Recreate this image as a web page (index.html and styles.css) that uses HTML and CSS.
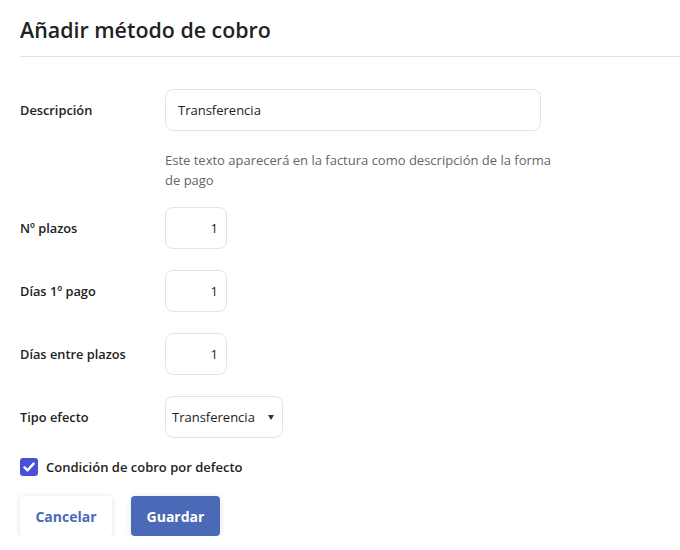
FILE: index.html
```html
<!DOCTYPE html>
<html lang="es">
<head>
<meta charset="utf-8">
<link rel="stylesheet" href="styles.css">
</head>
<body>
<div class="page">
  <header class="head"><h1 class="title">Añadir método de cobro</h1></header>
  <form class="form">
    <div class="row">
      <label class="label">Descripción</label>
      <div class="field">
        <input class="input wide" type="text" value="Transferencia">
        <p class="help">Este texto aparecerá en la factura como descripción de la forma de pago</p>
      </div>
    </div>
    <div class="row">
      <label class="label">Nº plazos</label>
      <div class="field"><input class="input num" type="text" value="1"></div>
    </div>
    <div class="row">
      <label class="label">Días 1º pago</label>
      <div class="field"><input class="input num" type="text" value="1"></div>
    </div>
    <div class="row">
      <label class="label">Días entre plazos</label>
      <div class="field"><input class="input num" type="text" value="1"></div>
    </div>
    <div class="row">
      <label class="label">Tipo efecto</label>
      <div class="field">
        <div class="select"><span>Transferencia</span><span class="caret"></span></div>
      </div>
    </div>
    <label class="check">
      <span class="box"><svg width="18" height="18" viewBox="0 0 18 18"><path d="M4.5 9.3 L7.6 12.3 L13.6 5.6" fill="none" stroke="#fff" stroke-width="2.4" stroke-linecap="round" stroke-linejoin="round"/></svg></span>
      <span>Condición de cobro por defecto</span>
    </label>
    <div class="actions">
      <button type="button" class="btn cancel">Cancelar</button>
      <button type="button" class="btn save">Guardar</button>
    </div>
  </form>
</div>
</body>
</html>
```
FILE: styles.css
```css
* { box-sizing: border-box; }
html, body { margin: 0; padding: 0; background: #fff; }
body { font-family: "Open Sans", "Noto Sans", sans-serif; color: #222; }
.page { padding-left: 20px; }
.head { border-bottom: 1px solid #e2e1e8; height: 57px; padding-top: 15px; }
.title { margin: 0; font-size: 21.4px; font-weight: 600; line-height: 30px; color: #222; letter-spacing: 0; }
.form { padding-top: 32px; display: flex; flex-direction: column; }
.row { display: flex; align-items: flex-start; margin-bottom: 21px; }
.label { width: 145px; flex: none; font-size: 12.8px; font-weight: 600; line-height: 42px; height: 42px; color: #222; }
.field { display: flex; flex-direction: column; }
.input { height: 42px; border: 1px solid #e3e3ec; border-radius: 8px; font-family: inherit; font-size: 13px; color: #222; background: #fff; outline: none; }
.wide { width: 376px; padding: 0 12px; }
.num { width: 62px; padding: 0 8px; text-align: right; }
.help { margin: 19px 0 -4px; width: 392px; font-size: 13px; line-height: 20px; color: #666; }
.select { width: 118px; height: 42px; border: 1px solid #e3e3ec; border-radius: 8px; display: flex; align-items: center; justify-content: space-between; padding: 0 8px 0 6px; font-size: 13px; color: #222; }
.caret { width: 0; height: 0; border-left: 3.5px solid transparent; border-right: 3.5px solid transparent; border-top: 5px solid #333; margin-right: 0; }
.check { display: flex; align-items: center; gap: 8px; font-size: 13px; font-weight: 600; margin-top: -1px; height: 18px; color: #222; }
.box { width: 18px; height: 18px; border-radius: 3px; background: #4a4fd6; display: block; }
.box svg { display: block; }
.actions { display: flex; gap: 19px; margin-top: 20px; }
.btn { height: 40px; border: none; border-radius: 4px; font-family: inherit; font-size: 14px; font-weight: 700; padding: 0; }
.cancel { width: 92px; background: #fff; color: #4a6ab8; box-shadow: 0 1px 6px rgba(0,0,0,0.12); }
.save { width: 89px; background: #4a69b6; color: #fff; box-shadow: 0 1px 6px rgba(0,0,0,0.12); }
```
